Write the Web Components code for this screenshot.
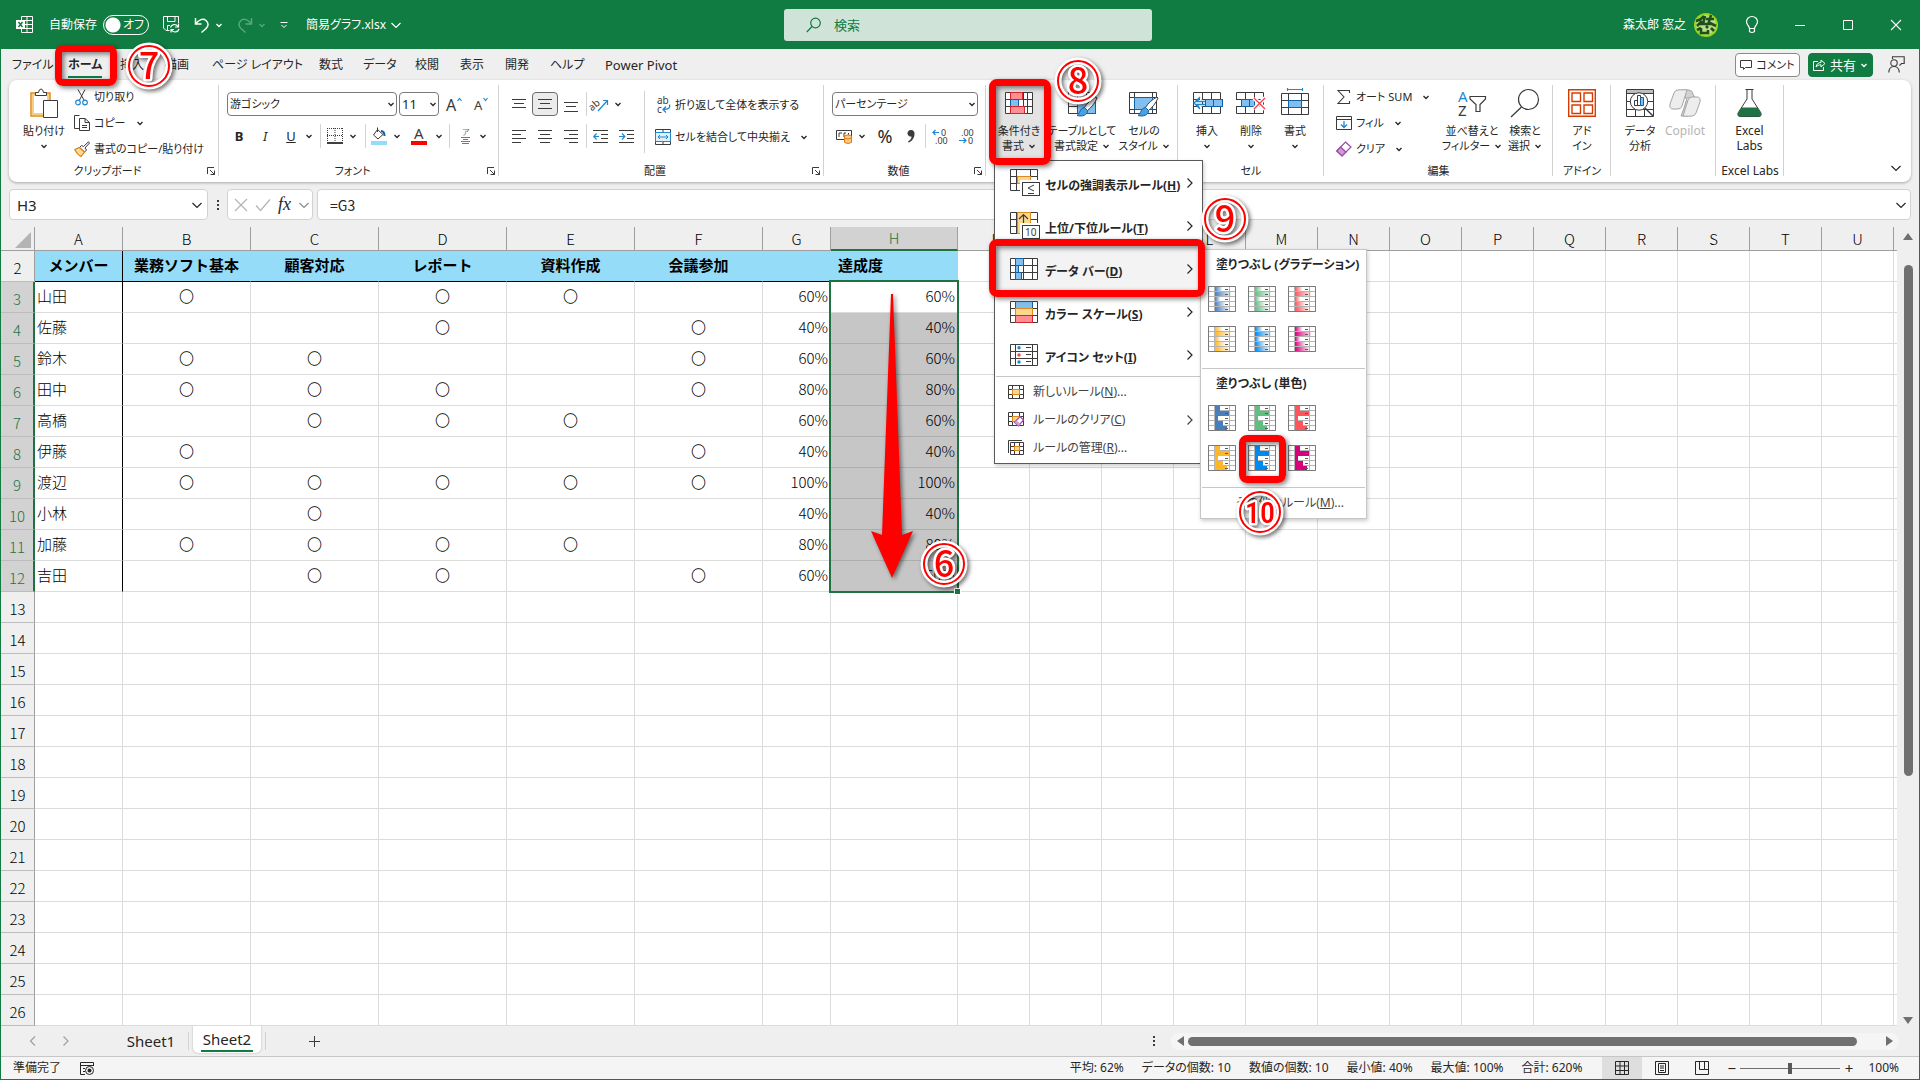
<!DOCTYPE html>
<html lang="ja">
<head>
<meta charset="utf-8">
<title>簡易グラフ.xlsx</title>
<style>
  html, body {
    margin: 0;
    height: 100%;
  }

  body {
    --green: #107c41;
    --ink: #262626;
    --chrome: #efefef;
    --line: #d2d2d2;
    --blue: #1e88d2;
    --red: #ff0000;
    font-family: "Noto Sans", "Noto Sans CJK JP", sans-serif;
    font-size: 12px;
    line-height: 16px;
    color: var(--ink);
    overflow: hidden;
  }
</style>
</head>
<body>
<excel-window></excel-window>

<script>
const BASE_CSS = `
  *, *::before, *::after { box-sizing: border-box; }
  button, input, select {
    font: inherit;
    color: inherit;
    border: 0;
    margin: 0;
    padding: 0;
    background: none;
    border-radius: 0;
    font-feature-settings: inherit;
  }
  button { white-space: nowrap; cursor: default; }
  svg { display: block; }
`;

class BaseElement extends HTMLElement {
  constructor() {
    super();
    this.attachShadow({ mode: 'open' });
  }

  connectedCallback() {
    this.shadowRoot.innerHTML = `<style>${BASE_CSS}${this.styles()}</style>${this.render()}`;
  }

  styles() { return ''; }
  render() { return '<slot></slot>'; }
}

/* ---------- icons ---------- */

const DARK = '#3b3b3b';

// outlined table with the given inner column and row lines
const table = (w, h, xs, ys, stroke = DARK) => `
  <path fill="#fff" stroke="${stroke}" d="M.5 .5H${w - 0.5}V${h - 0.5}H.5Z"/>
  <path fill="none" stroke="${stroke}" d="${xs.map(x => `M${x}.5 0V${h}`).join('')}${ys.map(y => `M0 ${y}.5H${w}`).join('')}"/>`;

const box = (x, y, w, h, fill, stroke) =>
  `<rect x="${x}.5" y="${y}.5" width="${w}" height="${h}" fill="${fill}" stroke="${stroke}"/>`;

const brush = (x, y) => `<g transform="translate(${x} ${y})">
  <path fill="#fff" stroke="${DARK}" d="M19 0 20 1C18 6 14 11 10.500 13.500L7.500 10.500C10 6 15 2 19 0Z"/>
  <path fill="#4ba0e0" stroke="#0f62a8" d="M7.500 10.500 10.500 13.500C11 18 5 20 0 18.500 3 17 2.500 11 7.500 10.500Z"/></g>`;

const lines = rows => `<path stroke="${DARK}" d="${rows.map(([x, y, w]) => `M${x} ${y}.5h${w}`).join('')}"/>`;

const ICONS = {
  chevron: [8, 8, `<path fill="none" stroke="currentColor" stroke-width="1.300" d="M1.500 3 4 5.500 6.500 3"/>`],
  chevronBig: [12, 12, `<path fill="none" stroke="currentColor" stroke-width="1.200" d="M1.500 4 6 8.500 10.500 4"/>`],
  arrowRight: [8, 12, `<path fill="none" stroke="currentColor" stroke-width="1.200" d="M1.500 1.500 6 6 1.500 10.500"/>`],
  arrowLeft: [8, 12, `<path fill="none" stroke="currentColor" stroke-width="1.200" d="M6 1.500 1.500 6 6 10.500"/>`],
  launcher: [10, 10, `<path fill="none" stroke="${DARK}" d="M1.500 8V1.500H8M4 4 8.500 8.500M8.500 4.500V8.500H4.500"/>`],
  excel: [17, 17, `<path fill="none" stroke="#fff" d="M5.500 4V.5H16.500V16.500H5.500V13M11 .5V16.500M5.500 4.500H16.500M5.500 8.500H16.500M5.500 12.500H16.500"/>
    <rect y="4" width="9" height="9" fill="#fff"/><path stroke="#107c41" stroke-width="1.500" d="M2.500 6 6.500 11M6.500 6 2.500 11"/>`],
  save: [17, 17, `<path fill="none" stroke="#fff" d="M6.500 14.500H3L.5 12V.5H15.500V7M4.500 .5V5.500H12V.5M4.500 14V9.500H7"/>
    <path fill="none" stroke="#fff" stroke-width="1.200" d="M7.500 11.500C8.500 8 13 7.500 15 10.500M15.500 7.500V11H12M16 13C15 16.500 10.500 17 8.500 14M8 16.500V13.500H11"/>`],
  undo: [16, 16, `<path fill="none" stroke="#fff" stroke-width="1.500" d="M1.500 1V7H7.500M1.500 7C5 2.500 9 1 12 3.500 15 6 14.500 9 12 11.500L7.500 15.500"/>`],
  redo: [16, 16, `<path fill="none" stroke="#5aa67c" stroke-width="1.500" d="M14.500 1V7H8.500M14.500 7C11 2.500 7 1 4 3.500 1 6 1.500 9 4 11.500L8.500 15.500"/>`],
  customize: [8, 8, `<path fill="none" stroke="#fff" d="M.5 1.500H7.500M1.500 4 4 6.500 6.500 4"/>`],
  search: [16, 16, `<circle cx="9.500" cy="6" r="4.800" fill="none" stroke="#107c41" stroke-width="1.200"/><path stroke="#107c41" stroke-width="1.200" d="M6 9.500.8 15"/>`],
  avatar: [24, 24, `<circle cx="12" cy="12" r="12" fill="#9bd51c"/><circle cx="12" cy="12" r="10" fill="#b9dd8a"/><path fill="none" stroke="#1f4f1a" stroke-width="2.600" d="M2 8Q7 7 10 3M11 3 9 11M3 13 8 8M12 6H20M17 2 14 12M14 9 22 13M3 17 7 15M7 15V20H14V17M12 13 14 15M17 15 20 18M5 11H18"/>`],
  bulb: [14, 18, `<path fill="none" stroke="#fff" stroke-width="1.200" d="M4.500 12.500C4.500 10 1.500 9 1.500 5.800A5.500 5.300 0 0 1 12.500 5.800C12.500 9 9.500 10 9.500 12.500ZM4.500 12.500V15.500Q7 17.500 9.500 15.500V12.500"/>`],
  min: [12, 12, `<path stroke="#fff" d="M1 6.500H11"/>`],
  max: [12, 12, `<path fill="none" stroke="#fff" d="M1.500 1.500H10.500V10.500H1.500Z"/>`],
  close: [12, 12, `<path stroke="#fff" stroke-width="1.100" d="M1 1 11 11M11 1 1 11"/>`],
  comment: [12, 12, `<path fill="none" stroke="${DARK}" d="M.5 1.500H11.500V8.500H5.500L3.500 10.500V8.500H.5Z"/>`],
  share: [13, 13, `<path fill="none" stroke="#fff" d="M5 3.500H.5V12.500H10.500V9M3 9C3.500 6 5.500 4.500 8 4.500V2L12 5.500 8 9V6.800C6 6.800 4.500 7.500 3 9Z"/>`],
  person: [17, 17, `<path fill="none" stroke="${DARK}" stroke-width="1.100" d="M4.500 3V.8H16.200V7.500H13.500L11.500 9.500"/><circle cx="6" cy="7" r="3.200" fill="none" stroke="${DARK}" stroke-width="1.100"/><path fill="none" stroke="${DARK}" stroke-width="1.100" d="M.8 16.500C1 12.500 3 10.500 6 10.500S11 12.500 11.300 16.500"/>`],
  paste: [28, 30, `<path fill="#fff7e6" stroke="#e08a1e" stroke-width="1.500" d="M1 5H20V28H1Z"/><path fill="#fff" stroke="#f6cf85" stroke-width="2" d="M3 7H18V26H3Z"/>
    <path fill="#fff" stroke="${DARK}" d="M5.500 7.500V4.500H8.500Q9 1 11 1T13.500 4.500H16.500V7.500Z"/><path fill="#fff" stroke="${DARK}" d="M13.500 12.500H27.500V29.500H13.500Z"/>`],
  cut: [16, 17, `<path fill="none" stroke="${DARK}" d="M4 .5 10.500 12M11 .5 5 12"/><circle cx="4" cy="13.500" r="2.300" fill="none" stroke="#1e88d2" stroke-width="1.200"/><circle cx="11" cy="13.500" r="2.300" fill="none" stroke="#1e88d2" stroke-width="1.200"/>`],
  copy: [16, 16, `<path fill="#fff" stroke="${DARK}" d="M5 13.500H.5V.5H5.500"/><path fill="#fff" stroke="${DARK}" d="M5.500 3.500H11L15.500 7.500V15.500H5.500Z"/><path fill="none" stroke="${DARK}" d="M11 3.500V7.500H15.500M8 10.500H13M8 12.500H13"/>`],
  format: [16, 16, `<path fill="#fff" stroke="${DARK}" d="M14.500 .8 15.500 2 11 7 12.500 9 10.500 11 5.500 6.500 7.500 4.500 9.500 5.500Z"/><path fill="#f9dca0" stroke="#e07b10" stroke-width="1.200" d="M5.500 6.500 10.500 11 7 15.500C4 14 2 11 .8 8.500Z"/>`],
  growFont: [17, 15, `<text x="0" y="14" font-size="16" fill="${DARK}">A</text><path fill="none" stroke="#1e88d2" stroke-width="1.200" d="M11.500 4 13.500 1.500 15.500 4"/>`],
  shrinkFont: [15, 14, `<text x="0" y="13" font-size="13" fill="${DARK}">A</text><path fill="none" stroke="#1e88d2" stroke-width="1.200" d="M9.500 1 11.500 3.500 13.500 1"/>`],
  borders: [16, 16, `<path fill="none" stroke="${DARK}" stroke-dasharray="1 1" d="M0 .5H16M.5 0V14M15.500 0V14M8 0V14M0 7.500H16"/><path stroke="#000" stroke-width="1.500" d="M0 15H16"/>`],
  fill: [16, 18, `<path fill="#fff" stroke="${DARK}" d="M6.500 2.500 12 7.500 7 12 2.500 8ZM6.500 5V.5"/><path fill="none" stroke="#0f62a8" stroke-width="2" d="M10 4Q13.500 4 13.500 9"/><rect y="14" width="16" height="4" fill="#94dcf8"/>`],
  fontColor: [16, 18, `<text x="3" y="12" font-size="15" fill="${DARK}">A</text><rect y="14" width="16" height="4" fill="#f00"/>`],
  ruby: [12, 18, `<text x="2" y="8" font-size="8" fill="#777">ア</text><path stroke="#777" d="M1 10.500H10M3 12.500H8M1 14.500H10M2 16.500H9"/>`],
  top: [14, 14, lines([[0, 2, 14], [2, 6, 10], [0, 10, 14]])],
  middle: [14, 14, lines([[0, 2, 14], [2, 6, 10], [0, 11, 14]])],
  bottom: [14, 18, lines([[0, 7, 14], [2, 11, 10], [0, 16, 14]])],
  left: [14, 14, lines([[0, 1, 14], [0, 5, 9], [0, 9, 14], [0, 13, 9]])],
  center: [14, 14, lines([[0, 1, 14], [2, 5, 10], [0, 9, 14], [2, 13, 10]])],
  right: [14, 14, lines([[0, 1, 14], [5, 5, 9], [0, 9, 14], [5, 13, 9]])],
  orient: [16, 16, `<text x="-4" y="11" font-size="10" fill="${DARK}" transform="rotate(-40 4 8)">ab</text><path fill="none" stroke="#1e88d2" stroke-width="1.200" d="M6 15 15 5M11 4.500H15.500V9"/>`],
  outdent: [15, 14, `${lines([[0, 1, 15], [8, 5, 7], [8, 9, 7], [0, 13, 15]])}<path fill="none" stroke="#1e88d2" stroke-width="1.200" d="M6 7.500H.8M3.500 4.500.8 7.500 3.500 10.500"/>`],
  indent: [15, 14, `${lines([[0, 1, 15], [8, 5, 7], [8, 9, 7], [0, 13, 15]])}<path fill="none" stroke="#1e88d2" stroke-width="1.200" d="M0 7.500H5.500M3 4.500 5.800 7.500 3 10.500"/>`],
  wrap: [16, 16, `<text x="2" y="7" font-size="10" fill="${DARK}">ab</text><text x="2" y="16" font-size="10" fill="${DARK}">c</text><path fill="none" stroke="#1e88d2" stroke-width="1.300" d="M14.500 7.500Q16 12.500 8.500 12.500M11 9.500 8 12.500 11 15.500"/>`],
  merge: [16, 16, `<path fill="#fff" stroke="${DARK}" d="M.5 .5H15.500V15.500H.5ZM8 .5V3.500M8 12V15.500"/><path fill="#dff0fb" stroke="#1e88d2" d="M.5 3.500H15.500V12.500H.5Z"/><path fill="none" stroke="#1e88d2" d="M3 8H13M5 6 3 8 5 10M11 6 13 8 11 10"/>`],
  currency: [17, 15, `<path fill="#fff" stroke="${DARK}" d="M.5 1.500H15.500V10.500H.5Z"/><path fill="none" stroke="${DARK}" d="M6 4H3V8M8 8V4H10M12.500 4V8"/><path fill="#f9c98e" stroke="#e07b10" d="M8.500 7V13.500Q12 15.500 15.500 13.500V7Q12 4.500 8.500 7ZM8.500 9Q12 11 15.500 9"/>`],
  comma: [8, 14, `<path fill="${DARK}" d="M4 1A3.200 3.200 0 0 1 7.500 4.500C7.500 9 5 12.500 1.500 13.500L1 12.500C3.500 11 4.500 9.500 4.500 7.500A3.300 3.300 0 1 1 4 1Z"/>`],
  incDec: [17, 17, `<text x="9" y="8" font-size="9" fill="${DARK}">0</text><text x="3" y="16" font-size="9" fill="${DARK}">.00</text><path fill="none" stroke="#1e88d2" stroke-width="1.200" d="M7 4.500H1M3.500 2 1 4.500 3.500 7"/>`],
  decDec: [17, 17, `<text x="3" y="8" font-size="9" fill="${DARK}">.00</text><text x="10" y="16" font-size="9" fill="${DARK}">0</text><path fill="none" stroke="#1e88d2" stroke-width="1.200" d="M1 12.500H8M5.500 10 8 12.500 5.500 15"/>`],
  cond: [28, 28, `<g transform="translate(0 3)">${table(28, 22, [5, 18, 22], [7, 14])}${box(5, 0, 12, 7, '#ff8f93', '#d4252c')}${box(5, 7, 8, 7, '#83bfee', '#0f62a8')}${box(5, 14, 14, 7, '#ff8f93', '#d4252c')}</g>`],
  asTable: [32, 28, `<g transform="translate(2 3)">${table(28, 22, [9, 18], [7, 14])}${box(9, 7, 18, 14, '#83bfee', '#0f62a8')}</g>${brush(11, 8)}`],
  cellStyle: [32, 28, `<g transform="translate(1 3)">${table(28, 22, [5, 23], [5, 17])}${box(5, 5, 18, 12, '#83bfee', '#0f62a8')}</g>${brush(10, 8)}`],
  insert: [32, 28, `<g transform="translate(2 3)">${table(28, 22, [9, 18], [7, 14])}${box(12, 7, 17, 7, '#83bfee', '#0f62a8')}<path stroke="#0f62a8" d="M20.500 7V14"/><path fill="#fff" stroke="#1e88d2" stroke-width="1.300" d="M12 9.500H4L6.500 6M12 12.500H4L6.500 16M7 5 1 11 7 17"/></g>`],
  remove: [30, 28, `<g transform="translate(0 3)">${table(28, 22, [9, 18], [7, 14])}<rect x="-1" y="8" width="5" height="6" fill="#fff"/>${box(5, 7, 13, 7, '#83bfee', '#0f62a8')}<path stroke="#0f62a8" d="M13.500 7V14"/><path stroke="#fff" stroke-width="4" d="M18 6 29 17M29 6 18 17"/><path stroke="#e8484d" stroke-width="1.400" d="M18 6 29 17M29 6 18 17"/></g>`],
  cellFormat: [28, 30, `<path fill="none" stroke="#1e88d2" stroke-width="1.200" d="M6.500 0V3M21.500 0V3M6.500 1.500H21.500"/><g transform="translate(0 5)">${table(28, 22, [7, 20], [7, 14])}${box(7, 7, 13, 7, '#83bfee', '#0f62a8')}</g>`],
  sum: [16, 16, `<path fill="none" stroke="${DARK}" stroke-width="1.100" d="M13.500 4V1.500H2L8 8 2 14.500H13.500V12"/>`],
  fillDown: [16, 16, `<path fill="#fff" stroke="${DARK}" d="M.5 1.500H15.500V14.500H.5ZM.5 4.500H15.500"/><path fill="none" stroke="#1e88d2" stroke-width="1.300" d="M8 6V12.500M5 9.500 8 12.500 11 9.500"/>`],
  eraser: [16, 16, `<path fill="#fff" stroke="#9b4aa5" stroke-width="1.200" d="M9.500 1 15 6 6 15 .8 10Z"/><path fill="#cf9bd6" stroke="#9b4aa5" stroke-width="1.200" d="M4.500 6 10 11 6 15 .8 10Z"/>`],
  sort: [30, 28, `<text x="1" y="13" font-size="15" fill="#1e88d2">A</text><text x="1" y="27" font-size="15" fill="${DARK}">Z</text><path fill="#fff" stroke="${DARK}" stroke-width="1.200" d="M13 7.500H28.500V10L23 15.500V22.500H19V15.500L13 10Z"/>`],
  find: [30, 30, `<circle cx="18.500" cy="11.500" r="10" fill="#fff" stroke="${DARK}" stroke-width="1.200"/><path stroke="${DARK}" stroke-width="1.300" d="M11.500 19 1 29"/>`],
  addin: [28, 28, `<path fill="none" stroke="#d83b01" stroke-width="1.400" d="M.7 .7H27.300V27.300H.7ZM4 4H12.500V12.500H4ZM16 4H24.500V12.500H16ZM4 16H12.500V24.500H4ZM16 16H24.500V24.500H16Z"/>`],
  analyze: [28, 28, `<path fill="#fff" stroke="${DARK}" d="M.5 .5H27.500V27.500H.5Z"/><rect x="1" y="1" width="26" height="3" fill="#bdbdbd"/><path stroke="${DARK}" d="M0 4.500H28M0 12.500H6M22 12.500H28M0 20.500H28M9.500 20V28M18.500 20V28"/>
    <circle cx="13" cy="12.500" r="8.700" fill="#fff" stroke="${DARK}"/><path stroke="${DARK}" stroke-width="1.500" d="M19 19 27 27"/><path fill="#fff" stroke="${DARK}" d="M8.500 11.500H11.500V16.500H8.500ZM11.500 6.500H14.500V16.500H11.500Z"/><path fill="#83bfee" stroke="#0f62a8" d="M14.500 8.500H17.500V16.500H14.500Z"/>`],
  copilot: [32, 28, `<path fill="#d2d2d2" stroke="#a5a5a5" d="M13 1H20Q23 1 24 5L26 9H18L15 19 12 27H19L22 20Z"/><path fill="#ededed" stroke="#a5a5a5" d="M10 .8H18L13 17Q12 20 9 20H4Q0 20 1 15L5 4Q6 .8 10 .8Z"/><path fill="#ededed" stroke="#a5a5a5" d="M22 27.200H14L19 11Q20 8 23 8H28Q32 8 31 13L27 24Q26 27.200 22 27.200Z"/>`],
  flask: [26, 28, `<path fill="#fff" stroke="${DARK}" d="M8.500 .5H16.500M10 .5V10L1 24Q0 27.500 3 27.500H22Q25 27.500 24 24L15 10V.5"/><path fill="#1f7244" d="M4.500 18.500H20.500L24 24.500Q24.500 27.500 22 27.500H3Q.5 27.500 1 24.500Z"/>`],
  menuHighlight: [31, 28, `${table(28, 22, [6, 20], [7, 14])}${box(7, 7, 13, 7, '#fbd78f', '#e08a1e')}<rect x="10" y="11" width="21" height="17" fill="#fff"/>${box(12, 13, 17, 13, '#fff', DARK)}<path fill="none" stroke="${DARK}" d="M24 16 18 19 24 22M18 24.500H24"/>`],
  menuTop: [31, 28, `${table(28, 22, [6, 20], [7, 14])}${box(7, 0, 13, 21, '#fbd78f', '#e08a1e')}<path fill="none" stroke="${DARK}" stroke-width="1.200" d="M13.500 12V2.500M9 7 13.500 2.500 18 7"/><rect x="10" y="11" width="21" height="17" fill="#fff"/>${box(12, 13, 17, 13, '#fff', DARK)}<text x="15" y="24" font-size="10" font-weight="normal" fill="${DARK}">10</text>`],
  menuBar: [28, 22, `${table(28, 22, [5, 13, 22], [7, 14])}${box(5, 0, 8, 7, '#83bfee', '#0f62a8')}${box(5, 7, 3, 7, '#83bfee', '#0f62a8')}${box(5, 14, 6, 7, '#83bfee', '#0f62a8')}`],
  menuScale: [28, 22, `${table(28, 22, [5, 22], [7, 14])}${box(5, 0, 17, 7, '#83bfee', '#0f62a8')}${box(5, 7, 17, 7, '#fbd78f', '#e08a1e')}${box(5, 14, 17, 7, '#ff8f93', '#d4252c')}`],
  menuSet: [28, 22, `${table(28, 22, [5, 22], [7, 14])}<circle cx="9" cy="3.800" r="1.700" fill="#1e88d2"/><circle cx="9" cy="11" r="1.700" fill="#e8484d"/><circle cx="9" cy="18" r="1.700" fill="#1e88d2"/><path stroke="${DARK}" d="M16 3.500H21M16 10.500H21M16 17.500H21"/>`],
  newRule: [16, 14, `${table(16, 14, [4, 11], [4, 9])}${box(4, 4, 7, 5, '#fbd78f', '#e08a1e')}`],
  clearRule: [16, 16, `${table(16, 14, [4, 11], [4, 9])}${box(4, 4, 7, 5, '#fbd78f', '#e08a1e')}<path fill="#fff" stroke="#9b4aa5" stroke-width="1.200" d="M12 4.500 15.500 8 10.500 14 6.500 10.500Z"/><path fill="#cf9bd6" d="M8.500 8.500 12.500 12 10.500 14 6.500 10.500Z"/>`],
  manageRule: [16, 15, `<path fill="none" stroke="${DARK}" d="M.5 13V.5H14"/><g transform="translate(2 2)">${table(14, 13, [4, 9], [4, 8])}${box(4, 4, 5, 4, '#fbd78f', '#e08a1e')}</g>`],
  cancel: [14, 14, `<path stroke="#b4b4b4" stroke-width="1.200" d="M1 1 13 13M13 1 1 13"/>`],
  enter: [16, 14, `<path fill="none" stroke="#b4b4b4" stroke-width="1.200" d="M1 7.500 5.500 12.500 15 1.500"/>`],
  dots: [4, 12, `<path fill="${DARK}" d="M1 1H3V3H1ZM1 5H3V7H1ZM1 9H3V11H1Z"/>`],
  plus: [12, 12, `<path stroke="${DARK}" d="M6.500 1V12M1 6.500H12"/>`],
  macro: [15, 13, `<path fill="none" stroke="#262626" d="M5 12.500H.5V.5H13.500V4M.5 3.500H13.500M3 6.500H5M3 9.500H5"/><circle cx="9.500" cy="8.500" r="4" fill="none" stroke="#262626"/><circle cx="9.500" cy="8.500" r="2" fill="#262626"/>`],
  viewNormal: [14, 14, `<path fill="none" stroke="#262626" d="M.5 .5H13.500V13.500H.5ZM5 .5V13.500M9.500 .5V13.500M.5 5H13.500M.5 9.500H13.500"/>`],
  viewPage: [14, 14, `<path fill="none" stroke="#262626" d="M.5 .5H13.500V13.500H.5ZM3.500 2.500H10.500V11.500H3.500ZM5 5H9M5 7H9M5 9.500H9"/>`],
  viewBreak: [14, 14, `<path fill="none" stroke="#262626" d="M.5 .5H13.500V13.500H.5ZM4.500 .5V8.500H9.500V.5M9.500 8.500H13.500"/>`],
  triUp: [10, 8, `<path fill="#707070" d="M5 0 10 7H0Z"/>`],
  triDown: [10, 8, `<path fill="#707070" d="M0 1H10L5 8Z"/>`],
  triLeft: [8, 10, `<path fill="#707070" d="M0 5 7 0V10Z"/>`],
  triRight: [8, 10, `<path fill="#707070" d="M8 5 1 0V10Z"/>`],
};

const svg = ([w, h, body]) => `<svg width="${w}" height="${h}" viewBox="0 0 ${w} ${h}" aria-hidden="true">${body}</svg>`;

class XlIcon extends BaseElement {
  styles() { return ':host { display: block; flex: none; } svg { overflow: visible; }'; }
  render() { return svg(ICONS[this.getAttribute('name')]); }
}

const icon = name => `<xl-icon name="${name}"></xl-icon>`;

/* ---------- title bar and tabs ---------- */

class TitleBar extends BaseElement {
  styles() {
    return `
      :host {
        display: grid;
        grid-template-columns: 1fr 368px 1fr;
        align-items: center;
        height: 49px;
        padding-left: 16px;
        background: var(--green);
        color: #fff;
      }
      div { display: flex; align-items: center; }
      .switch {
        appearance: none;
        width: 46px;
        height: 20px;
        border: 1px solid #fff;
        border-radius: 10px;
        background: radial-gradient(circle at 9px 9px, #fff 7px, transparent 8px);
      }
      .toggle { display: grid; align-items: center; }
      .toggle > * { grid-area: 1 / 1; }
      .toggle span { justify-self: end; padding-right: 5px; }
      .quick { gap: 6px; }
      .quick button, .right button { display: grid; place-items: center; }
      .undo { grid-template-columns: 16px 8px; gap: 5px; margin-left: 8px; }
      .file { display: flex; align-items: center; gap: 4px; }
      .search {
        height: 32px;
        border-radius: 3px;
        background: #cfe3d8;
        color: var(--green);
        gap: 12px;
        padding-left: 22px;
      }
      .search input { width: 240px; outline: 0; font-size: 13px; }
      .search input::placeholder { color: var(--green); opacity: 1; }
      .right { justify-content: flex-end; }
      .right button { width: 48px; height: 48px; }
      .user { display: flex; gap: 8px; align-items: center; margin-right: 10px; }
    `;
  }

  render() {
    return `
      <div>
        ${icon('excel')}
        <label for="auto" style="padding:0 6px 0 16px">自動保存</label>
        <span class="toggle"><input class="switch" id="auto" type="checkbox" role="switch"><span>オフ</span></span>
        <div class="quick" style="padding-left:14px">
          <button aria-label="上書き保存">${icon('save')}</button>
          <button class="undo" aria-label="元に戻す">${icon('undo')}${icon('chevron')}</button>
          <button class="undo" aria-label="やり直し">${icon('redo')}<span style="color:#5aa67c">${icon('chevron')}</span></button>
          <button aria-label="カスタマイズ" style="padding:0 18px 0 8px">${icon('customize')}</button>
        </div>
        <button class="file">簡易グラフ.xlsx ${icon('chevronBig')}</button>
      </div>
      <div class="search">${icon('search')}<input type="search" aria-label="検索" placeholder="検索"></div>
      <div class="right">
        <span class="user">森太郎 窓之 ${icon('avatar')}</span>
        <button aria-label="ヒント">${icon('bulb')}</button>
        <button aria-label="最小化">${icon('min')}</button>
        <button aria-label="最大化">${icon('max')}</button>
        <button aria-label="閉じる">${icon('close')}</button>
      </div>`;
  }
}

const TABS = [['ファイル', 56], ['ホーム', 52], ['挿入', 45], ['描画', 47], ['ページ レイアウト', 107], ['数式', 44],
  ['データ', 52], ['校閲', 45], ['表示', 45], ['開発', 45], ['ヘルプ', 55], ['Power Pivot', 80]];

class TabStrip extends BaseElement {
  styles() {
    return `
      :host { display: flex; align-items: center; height: 31px; padding: 0 14px 0 11px; }
      nav { display: flex; flex: 1; }
      nav button { text-align: left; height: 26px; }
      nav button:last-child { font-size: 13px; }
      .on { font-weight: bold; }
      .on span { display: inline-block; height: 26px; line-height: 26px; border-bottom: 2px solid var(--green); }
      .act {
        display: flex;
        align-items: center;
        justify-content: center;
        gap: 4px;
        height: 24px;
        border: 1px solid #8a8a8a;
        border-radius: 4px;
        background: #fff;
        margin-right: 8px;
        width: 65px;
        font-size: 11px;
      }
      .share { background: var(--green); border-color: var(--green); color: #fff; margin-right: 15px; font-size: 13px; }
    `;
  }

  render() {
    return `
      <nav>${TABS.map(([name, w]) => `<button class="${name === 'ホーム' ? 'on' : ''}" style="width:${w}px"><span>${name}</span></button>`).join('')}</nav>
      <button class="act">${icon('comment')}コメント</button>
      <button class="act share">${icon('share')}共有 ${icon('chevron')}</button>
      <button aria-label="アカウント">${icon('person')}</button>`;
  }
}

/* ---------- ribbon ---------- */

class RibbonGroup extends BaseElement {
  styles() {
    return `
      :host { display: flex; flex-direction: column; position: relative; padding: 4px 0 1px; flex: none; }
      :host::after {
        content: "";
        position: absolute;
        right: 0;
        top: 5px;
        bottom: 6px;
        width: 1px;
        background: var(--line);
      }
      .body { display: flex; height: 78px; }
      footer { display: flex; align-items: center; height: 18px; font-size: 11px; }
      :host([latin]) footer { font-size: 12px; }
      footer span { flex: 1; text-align: center; white-space: nowrap; }
      footer button { padding-right: 3px; }
    `;
  }

  render() {
    const launcher = this.hasAttribute('launcher')
      ? `<button aria-label="${this.getAttribute('label')}の設定">${icon('launcher')}</button>` : '';
    return `<div class="body"><slot></slot></div><footer><span>${this.getAttribute('label') || ''}</span>${launcher}</footer>`;
  }
}

class BigButton extends BaseElement {
  styles() {
    return `
      :host { display: block; flex: none; font-size: 11px; }
      :host([latin]) { font-size: 12px; }
      :host([active]) button { background: #e3e3e3; }
      :host([disabled]) { color: #b4b4b4; }
      button {
        width: 100%;
        height: 76px;
        display: grid;
        grid-template-rows: 38px 16px 15px;
        grid-template-columns: 100%;
        justify-items: center;
        align-items: center;
        line-height: 15px;
      }
      .two { display: flex; align-items: center; gap: 4px; }
    `;
  }

  render() {
    const chev = this.hasAttribute('menu') ? icon('chevron') : '';
    return `<button>${icon(this.getAttribute('icon'))}<span>${this.getAttribute('line1')}</span>
      <span class="two">${this.getAttribute('line2') || ''}${chev}</span></button>`;
  }
}

class SmallButton extends BaseElement {
  styles() {
    return `
      :host { display: block; font-size: 11px; }
      button { display: flex; align-items: center; height: 26px; gap: 4px; width: 100%; text-align: left; }
      .end { padding-left: 6px; }
    `;
  }

  render() {
    const chev = this.hasAttribute('menu') ? `<span class="end">${icon('chevron')}</span>` : '';
    return `<button>${icon(this.getAttribute('icon'))}<span><slot></slot></span>${chev}</button>`;
  }
}

class ToolButton extends BaseElement {
  styles() {
    return `
      :host { display: block; flex: none; }
      button { width: 100%; height: 24px; display: grid; place-items: center; font-size: 13px; }
      :host([pressed]) button { border: 1px solid #6b6b6b; border-radius: 4px; background: #ebebeb; }
    `;
  }

  render() {
    const name = this.getAttribute('icon');
    return `<button aria-label="${this.getAttribute('tip') || ''}">${name ? icon(name) : '<slot></slot>'}</button>`;
  }
}

class DropBox extends BaseElement {
  styles() {
    return `
      :host { display: grid; align-items: center; flex: none; height: 24px; font-size: 11px; }
      :host([latin]) { font-size: 13px; }
      select, xl-icon { grid-area: 1 / 1; }
      select {
        appearance: none;
        width: 100%;
        height: 24px;
        padding-left: 2px;
        border: 1px solid #7a7a7a;
        border-radius: 4px;
        background: #fff;
      }
      xl-icon { justify-self: end; margin-right: 2px; pointer-events: none; }
    `;
  }

  render() {
    return `<select aria-label="${this.getAttribute('tip')}"><option>${this.getAttribute('value')}</option></select>${icon('chevron')}`;
  }
}

const tool = (name, w, tip = name) => `<tool-button icon="${name}" tip="${tip}" style="width:${w}px"></tool-button>`;
const rule = w => `<i class="rule" style="width:${w}px"></i>`;

class RibbonBar extends BaseElement {
  styles() {
    return `
      :host {
        display: flex;
        height: 102px;
        margin: 0 8px;
        background: #fff;
        border-radius: 8px;
        box-shadow: 0 1px 3px rgba(0, 0, 0, 0.3);
      }
      .col { display: flex; flex-direction: column; }
      .rows { display: flex; flex-direction: column; gap: 8px; padding-top: 8px; }
      .row { display: flex; align-items: center; }
      .rule { height: 24px; background: linear-gradient(var(--line), var(--line)) center / 1px 100% no-repeat; }
      .tall { width: 1px; height: 62px; margin: 7px 10px 0 4px; background: var(--line); }
      .fold { margin: auto 9px 8px auto; }
    `;
  }

  render() {
    return `
      <ribbon-group label="クリップボード" launcher style="width:210px">
        <big-button icon="paste" line1="貼り付け" menu style="width:60px;padding-left:10px"></big-button>
        <div class="col" style="padding-left:5px">
          <small-button icon="cut">切り取り</small-button>
          <small-button icon="copy" menu>コピー</small-button>
          <small-button icon="format">書式のコピー/貼り付け</small-button>
        </div>
      </ribbon-group>
      <ribbon-group label="フォント" launcher style="width:280px">
        <div class="rows" style="padding-left:8px">
          <div class="row">
            <drop-box tip="フォント" value="游ゴシック" style="width:170px;margin-right:2px"></drop-box>
            <drop-box tip="サイズ" value="11" latin style="width:40px"></drop-box>
            ${tool('growFont', 30)}${tool('shrinkFont', 24)}
          </div>
          <div class="row">
            <tool-button tip="太字" style="width:24px"><b>B</b></tool-button>
            <tool-button tip="斜体" style="width:28px"><i>I</i></tool-button>
            <tool-button tip="下線" style="width:24px"><u>U</u></tool-button>
            ${tool('chevron', 12)}${rule(10)}${tool('borders', 20)}${tool('chevron', 16)}${rule(8)}
            ${tool('fill', 20)}${tool('chevron', 16)}${tool('fontColor', 28)}${tool('chevron', 12)}${rule(8)}
            ${tool('ruby', 26)}${tool('chevron', 8)}
          </div>
        </div>
      </ribbon-group>
      <ribbon-group label="配置" launcher style="width:325px">
        <div class="rows" style="padding-left:7px">
          <div class="row">${tool('top', 26)}<tool-button icon="middle" pressed tip="上下中央" style="width:26px"></tool-button>${tool('bottom', 26)}${rule(4)}${tool('orient', 24)}${tool('chevron', 12)}</div>
          <div class="row">${tool('left', 26)}${tool('center', 26)}${tool('right', 26)}${rule(4)}${tool('outdent', 24)}${tool('indent', 28)}</div>
        </div>
        <i class="tall"></i>
        <div class="col" style="gap:6px;padding-top:8px">
          <small-button icon="wrap">折り返して全体を表示する</small-button>
          <small-button icon="merge" menu>セルを結合して中央揃え</small-button>
        </div>
      </ribbon-group>
      <ribbon-group label="数値" launcher style="width:162px">
        <div class="rows" style="padding-left:8px">
          <drop-box tip="表示形式" value="パーセンテージ" style="width:146px"></drop-box>
          <div class="row">
            ${tool('currency', 24)}${tool('chevron', 12)}
            <tool-button tip="パーセント" style="width:34px"><span style="font-size:18px">%</span></tool-button>
            ${tool('comma', 18)}${rule(10)}${tool('incDec', 20)}${tool('decDec', 32)}
          </div>
        </div>
      </ribbon-group>
      <ribbon-group style="width:192px">
        <big-button icon="cond" line1="条件付き" line2="書式" menu active style="width:60px;margin-left:3px"></big-button>
        <big-button icon="asTable" line1="テーブルとして" line2="書式設定" menu style="width:66px"></big-button>
        <big-button icon="cellStyle" line1="セルの" line2="スタイル" menu style="width:58px"></big-button>
      </ribbon-group>
      <ribbon-group label="セル" style="width:146px">
        <big-button icon="insert" line1="挿入" menu style="width:44px;margin-left:7px"></big-button>
        <big-button icon="remove" line1="削除" menu style="width:44px"></big-button>
        <big-button icon="cellFormat" line1="書式" menu style="width:44px"></big-button>
      </ribbon-group>
      <ribbon-group label="編集" style="width:229px">
        <div class="col" style="width:108px;margin-left:12px">
          <small-button icon="sum" menu>オート SUM</small-button>
          <small-button icon="fillDown" menu>フィル</small-button>
          <small-button icon="eraser" menu>クリア</small-button>
        </div>
        <big-button icon="sort" line1="並べ替えと" line2="フィルター" menu style="width:56px"></big-button>
        <big-button icon="find" line1="検索と" line2="選択" menu style="width:50px"></big-button>
      </ribbon-group>
      <ribbon-group label="アドイン" style="width:58px">
        <big-button icon="addin" line1="アド" line2="イン" style="width:58px"></big-button>
      </ribbon-group>
      <ribbon-group style="width:105px">
        <big-button icon="analyze" line1="データ" line2="分析" style="width:48px;margin-left:5px"></big-button>
        <big-button icon="copilot" line1="Copilot" latin disabled style="width:42px"></big-button>
      </ribbon-group>
      <ribbon-group label="Excel Labs" latin style="width:68px">
        <big-button icon="flask" line1="Excel" line2="Labs" latin style="width:67px"></big-button>
      </ribbon-group>
      <span class="fold">${icon('chevronBig')}</span>`;
  }
}

/* ---------- formula bar ---------- */

class FormulaBar extends BaseElement {
  styles() {
    return `
      :host { display: flex; align-items: center; height: 31px; margin: 7px 8px; font-size: 15px; }
      .box { display: flex; align-items: center; height: 31px; border: 1px solid var(--line); border-radius: 4px; background: #fff; }
      .name { width: 199px; padding: 0 4px 0 7px; }
      .name input { flex: 1; min-width: 0; }
      .tools { width: 86px; justify-content: space-between; padding: 0 2px 0 6px; margin-right: 4px; color: #8a8a8a; }
      .fx { font: italic 18px "Liberation Serif", serif; color: #262626; }
      .formula { flex: 1; padding: 0 3px 0 12px; }
      .formula input { flex: 1; font-family: "Noto Sans CJK JP", sans-serif; font-size: 14px; }
      .dots { width: 19px; display: grid; place-items: center; }
    `;
  }

  render() {
    return `
      <div class="box name"><input aria-label="名前ボックス" value="H3">${icon('chevronBig')}</div>
      <span class="dots">${icon('dots')}</span>
      <div class="box tools">${icon('cancel')}${icon('enter')}<button class="fx">fx</button>${icon('chevronBig')}</div>
      <div class="box formula"><input aria-label="数式" value="=G3">${icon('chevronBig')}</div>`;
  }
}

/* ---------- sheet ---------- */

const COLUMNS = [88, 128, 128, 128, 128, 128, 68, 127, ...Array(13).fill(72)];
const HEADINGS = ['メンバー', '業務ソフト基本', '顧客対応', 'レポート', '資料作成', '会議参加', '', '達成度'];
const MEMBERS = [
  ['山田', '10110', '60%'],
  ['佐藤', '00101', '40%'],
  ['鈴木', '11001', '60%'],
  ['田中', '11101', '80%'],
  ['高橋', '01110', '60%'],
  ['伊藤', '10001', '40%'],
  ['渡辺', '11111', '100%'],
  ['小林', '01000', '40%'],
  ['加藤', '11110', '80%'],
  ['吉田', '01101', '60%'],
];

class SheetGrid extends BaseElement {
  styles() {
    return `
      :host { display: flex; flex: 1; min-height: 0; position: relative; overflow: hidden; }
      table {
        flex: 1;
        table-layout: fixed;
        border-collapse: separate;
        border-spacing: 0;
        background: #fff;
        font-family: "Noto Sans CJK JP", sans-serif;
        font-size: 15px;
        font-weight: 300;
        font-feature-settings: normal;
        color: #000;
        height: 0;
      }
      th, td { padding: 0; line-height: 22px; overflow: hidden; white-space: nowrap; }
      th { font-weight: inherit; background: var(--chrome); }
      thead th { height: 24px; border-right: 1px solid #9f9f9f; border-bottom: 1px solid #9f9f9f; }
      thead th:last-child { border-right: 0; }
      thead th.sel { background: #d2d2d2; color: #1f7244; border-bottom: 2px solid #1f7244; }
      tbody th {
        height: 31px;
        vertical-align: bottom;
        border-right: 1px solid #9f9f9f;
        border-bottom: 1px solid #bdbdbd;
        line-height: 26px;
      }
      tbody th.sel { background: #d2d2d2; color: #1f7244; border-right: 2px solid #1f7244; }
      td { border-right: 1px solid #dcdcdc; border-bottom: 1px solid #dcdcdc; padding: 0 2px 2px; text-align: center; }
      td:last-child { padding: 0; border-right: 0; }
      td.num { text-align: right; }
      td.name { text-align: left; border-right-color: #000; }
      .head td { background: #94dcf8; font-weight: bold; border-right-color: #94dcf8; border-bottom-color: #000; }
      .head td.name { text-align: center; border-right-color: #000; }
      .head td.blank { background: #fff; border-color: #dcdcdc; }
      .head td.goal { text-align: left; padding-left: 7px; }
      td.picked { background: #c6c6c6; border-bottom-color: #adadad; }
      .corner svg { margin: 3px 3px 0 auto; }
      .range {
        position: absolute;
        left: 828px;
        top: 53px;
        width: 130px;
        height: 313px;
        border: 2px solid #1f7244;
      }
      .range::after {
        content: "";
        position: absolute;
        right: -3px;
        bottom: -3px;
        width: 5px;
        height: 5px;
        background: #1f7244;
        outline: 1px solid #fff;
      }
      .scroll {
        flex: none;
        width: 22px;
        display: flex;
        flex-direction: column;
        align-items: center;
        padding: 6px 0 2px;
      }
      .scroll i { width: 9px; height: 511px; margin: 24px 0 auto; border-radius: 5px; background: #707070; }
    `;
  }

  row(n) {
    const cells = [];
    const member = MEMBERS[n - 3];
    for (let c = 0; c < COLUMNS.length + 1; c++) {
      if (n === 2) {
        const cls = c === 0 ? 'name' : c === 7 ? 'goal' : c > 7 ? 'blank' : '';
        cells.push(`<td class="${cls}">${HEADINGS[c] || ''}</td>`);
      } else if (member && c < 8) {
        if (c === 0) cells.push(`<td class="name">${member[0]}</td>`);
        else if (c < 6) cells.push(`<td>${member[1][c - 1] === '1' ? '〇' : ''}</td>`);
        else cells.push(`<td class="num ${c === 7 && n > 3 ? 'picked' : ''}">${member[2]}</td>`);
      } else {
        cells.push('<td></td>');
      }
    }
    return `<tr class="${n === 2 ? 'head' : ''}"><th scope="row" class="${member ? 'sel' : ''}">${n}</th>${cells.join('')}</tr>`;
  }

  render() {
    const letters = COLUMNS.map((w, i) => String.fromCharCode(65 + i));
    const rows = Array.from({ length: 25 }, (_, i) => this.row(i + 2)).join('');
    return `
      <table>
        <colgroup><col style="width:34px">${COLUMNS.map(w => `<col style="width:${w}px">`).join('')}<col></colgroup>
        <thead><tr>
          <th class="corner"><svg width="16" height="16"><path fill="#b4b4b4" d="M16 0V16H0Z"/></svg></th>
          ${letters.map(l => `<th scope="col" class="${l === 'H' ? 'sel' : ''}">${l}</th>`).join('')}<th></th>
        </tr></thead>
        <tbody>${rows}</tbody>
      </table>
      <div class="range"></div>
      <div class="scroll">${icon('triUp')}<i></i>${icon('triDown')}</div>`;
  }
}

class SheetBar extends BaseElement {
  styles() {
    return `
      :host { display: flex; height: 31px; align-items: center; border-bottom: 1px solid #c6c6c6; font-size: 15px; }
      .nav { display: flex; gap: 25px; width: 113px; padding-left: 28px; color: #9f9f9f; }
      button { height: 30px; }
      .tab { width: 75px; border-right: 1px solid var(--line); height: 18px; line-height: 18px; }
      .on {
        align-self: flex-start;
        width: 68px;
        height: 27px;
        margin: 0 4px;
        padding: 0 8px;
        background: #fff;
        border-radius: 0 0 5px 5px;
        box-shadow: 0 0 2px rgba(0, 0, 0, 0.3);
        clip-path: inset(0 -3px -3px -3px);
      }
      .on span { display: block; line-height: 22px; border-bottom: 2px solid var(--green); }
      .add { padding-left: 42px; border-left: 1px solid var(--line); height: 18px; }
      .dots { margin-left: auto; padding-right: 15px; }
      .track {
        display: flex;
        align-items: center;
        width: 728px;
        height: 17px;
        padding: 0 6px;
        margin-right: 20px;
        border-radius: 8px;
        background: #f5f5f5;
      }
      .track i { width: 669px; height: 9px; margin: 0 auto 0 3px; border-radius: 5px; background: #707070; }
    `;
  }

  render() {
    return `
      <span class="nav">${icon('arrowLeft')}${icon('arrowRight')}</span>
      <button class="tab">Sheet1</button>
      <button class="on"><span>Sheet2</span></button>
      <button class="add" aria-label="新しいシート">${icon('plus')}</button>
      <span class="dots">${icon('dots')}</span>
      <div class="track">${icon('triLeft')}<i></i>${icon('triRight')}</div>`;
  }
}

class StatusBar extends BaseElement {
  styles() {
    return `
      :host { display: flex; align-items: center; height: 22px; padding: 0 20px 0 12px; background: #f5f5f5; }
      .ready { width: 67px; }
      .stats { display: flex; gap: 18px; margin-left: auto; padding-right: 20px; }
      .view { width: 40px; height: 22px; display: grid; place-items: center; }
      .view.on { background: #dedede; }
      .zoom { display: flex; align-items: center; justify-content: space-between; width: 126px; margin: 0 15px 0 5px; font-size: 15px; }
      input { appearance: none; width: 100px; height: 12px; background: linear-gradient(#707070, #707070) center / 100% 1px no-repeat; }
      input::-webkit-slider-thumb { appearance: none; width: 4px; height: 11px; background: #595959; }
    `;
  }

  render() {
    const stats = ['平均: 62%', 'データの個数: 10', '数値の個数: 10', '最小値: 40%', '最大値: 100%', '合計: 620%'];
    return `
      <span class="ready">準備完了</span>${icon('macro')}
      <span class="stats">${stats.map(s => `<span>${s}</span>`).join('')}</span>
      <button class="view on" aria-label="標準">${icon('viewNormal')}</button>
      <button class="view" aria-label="ページ レイアウト">${icon('viewPage')}</button>
      <button class="view" aria-label="改ページ プレビュー">${icon('viewBreak')}</button>
      <span class="zoom">−<input type="range" aria-label="ズーム" min="0" max="200" value="100">+</span>
      <span>100%</span>`;
  }
}

/* ---------- menus ---------- */

class RuleMenu extends BaseElement {
  styles() {
    return `
      :host {
        display: block;
        width: 209px;
        padding-bottom: 2px;
        border: 1px solid #595959;
        background: #fff;
        box-shadow: 1px 2px 4px rgba(0, 0, 0, 0.2);
      }
      button { display: flex; align-items: center; width: 100%; text-align: left; }
      button > :last-child { margin-left: auto; margin-right: 8px; }
      .big { height: 43px; padding-left: 15px; gap: 4px; font-weight: bold; }
      .big span:first-child { width: 31px; }
      .big span:nth-child(2) { padding-top: 6px; }
      .big.on { background: #f3f3f3; }
      .small { height: 28px; padding: 1px 0 0 13px; gap: 9px; color: #444; }
      hr { margin: 0 1px; border: 0; border-top: 1px solid #c6c6c6; }
    `;
  }

  render() {
    const big = [['menuHighlight', 'セルの強調表示ルール', 'H'], ['menuTop', '上位/下位ルール', 'T'], ['menuBar', 'データ バー', 'D'],
      ['menuScale', 'カラー スケール', 'S'], ['menuSet', 'アイコン セット', 'I']];
    const small = [['newRule', '新しいルール', 'N', '...'], ['clearRule', 'ルールのクリア', 'C', ''], ['manageRule', 'ルールの管理', 'R', '...']];
    return `
      ${big.map(([i, t, k]) => `<button class="big ${k === 'D' ? 'on' : ''}"><span>${icon(i)}</span><span>${t}(<u>${k}</u>)</span>${icon('arrowRight')}</button>`).join('')}
      <hr>
      ${small.map(([i, t, k, e]) => `<button class="small">${icon(i)}<span>${t}(<u>${k}</u>)${e}</span>${e ? '<i></i>' : icon('arrowRight')}</button>`).join('')}`;
  }
}

const BAR_COLORS = [['#4a7ebb', '#5fbf7f', '#ff555a'], ['#ffb628', '#008aef', '#d6007b']];
const BAR_WIDTHS = [5, 14, 3, 8, 12];

class BarGallery extends BaseElement {
  styles() {
    return `
      :host {
        display: block;
        width: 167px;
        border: 1px solid #c6c6c6;
        background: #fff;
        box-shadow: 1px 2px 4px rgba(0, 0, 0, 0.2);
      }
      h3 { margin: 0; padding: 0 0 0 15px; font-size: 12px; line-height: 29px; white-space: nowrap; }
      .row { display: flex; padding-left: 1px; }
      .row button { width: 40px; height: 40px; display: grid; place-items: center; }
      hr { margin: 9px 1px 0; border: 0; border-top: 1px solid #c6c6c6; }
      .more { height: 30px; padding-left: 35px; color: #444; }
    `;
  }

  swatch(color, gradient) {
    const id = `g${color.slice(1)}`;
    const bars = BAR_WIDTHS.map((w, i) => gradient
      ? `<rect x="7" y="${1 + i * 5}" width="${w + 2}" height="4" fill="url(#${id})"/>`
      : `<rect x="7" y="${1 + i * 5}" width="${w}" height="${i < 4 ? 5 : 4}" fill="${color}"/>`).join('');
    return `<svg width="28" height="26">
      <linearGradient id="${id}"><stop offset="0" stop-color="${color}"/><stop offset="1" stop-color="${color}" stop-opacity=".1"/></linearGradient>
      ${table(28, 26, [6, 21], [5, 10, 15, 20], '#b4b4b4')}
      ${bars}
      <path stroke="#595959" d="M17 3.500h3M17 8.500h3M17 13.500h3M17 18.500h3M17 23.500h3"/>
      <path fill="none" stroke="#7a7a7a" d="M.5 .5H27.500V25.500H.5Z"/></svg>`;
  }

  block(gradient) {
    return BAR_COLORS.map(row => `<div class="row">${row.map(c => `<button aria-label="データ バー">${this.swatch(c, gradient)}</button>`).join('')}</div>`).join('');
  }

  render() {
    return `
      <h3>塗りつぶし (グラデーション)</h3>${this.block(true)}<hr>
      <h3>塗りつぶし (単色)</h3>${this.block(false)}<hr>
      <button class="more">その他のルール(<u>M</u>)...</button>`;
  }
}

/* ---------- annotations ---------- */

class MarkBox extends BaseElement {
  styles() {
    return `
      :host {
        display: block;
        border: 7px solid var(--red);
        border-radius: 8px;
        box-shadow: 2px 2px 5px rgba(0, 0, 0, 0.5), inset 2px 2px 5px rgba(0, 0, 0, 0.5);
        pointer-events: none;
      }
    `;
  }
}

class StepBadge extends BaseElement {
  styles() {
    return `
      :host { display: block; width: 48px; height: 48px; }
      svg { overflow: visible; filter: drop-shadow(2px 2px 2px rgba(0, 0, 0, 0.55)); }
      circle { fill: none; }
      .rim { stroke: #fff; stroke-width: 7; }
      .ring { stroke: var(--red); stroke-width: 2; }
      text {
        font-family: "Noto Sans CJK JP", sans-serif;
        font-size: 36px;
        font-weight: 500;
        text-anchor: middle;
        fill: var(--red);
        stroke: #fff;
        stroke-width: 5;
        stroke-linejoin: round;
        paint-order: stroke;
      }
      .narrow text { font-family: "Liberation Sans Narrow", "Roboto Condensed", "Liberation Sans", sans-serif; font-size: 30px; }
    `;
  }

  render() {
    const n = this.getAttribute('n');
    const narrow = n.length > 1;
    return `<svg class="${narrow ? 'narrow' : ''}" width="48" height="48">
      <circle class="rim" cx="24" cy="24" r="20"/>
      <text x="24" y="${narrow ? 35 : 37}">${n}</text>
      <circle class="ring" cx="24" cy="24" r="20"/>
    </svg>`;
  }
}

class DownArrow extends BaseElement {
  styles() { return ':host { display: block; } svg { overflow: visible; filter: drop-shadow(2px 2px 2px rgba(0, 0, 0, 0.5)); }'; }
  render() {
    return '<svg width="42" height="284"><path fill="#f00" d="M20 0H22L31 241 42 237 21 284 0 237 11 241Z"/></svg>';
  }
}

/* ---------- window ---------- */

class ExcelWindow extends BaseElement {
  styles() {
    return `
      :host {
        display: flex;
        flex-direction: column;
        position: relative;
        height: 100vh;
        background: var(--chrome);
        font-feature-settings: "palt";
      }
      main {
        display: flex;
        flex-direction: column;
        flex: 1;
        min-height: 0;
        border: 1px solid var(--green);
        border-top: 0;
      }
      .over { position: absolute; }
    `;
  }

  render() {
    const at = (x, y, w, h) => `style="left:${x}px;top:${y}px${w ? `;width:${w}px;height:${h}px` : ''}"`;
    return `
      <title-bar></title-bar>
      <main>
        <tab-strip></tab-strip>
        <ribbon-bar></ribbon-bar>
        <formula-bar></formula-bar>
        <sheet-grid></sheet-grid>
        <sheet-bar></sheet-bar>
        <status-bar></status-bar>
      </main>
      <rule-menu class="over" ${at(994, 160)}></rule-menu>
      <bar-gallery class="over" ${at(1200, 249)}></bar-gallery>
      <down-arrow class="over" ${at(871, 294)}></down-arrow>
      <mark-box class="over" ${at(55, 45, 62, 41)}></mark-box>
      <mark-box class="over" ${at(989, 79, 62, 86)}></mark-box>
      <mark-box class="over" ${at(989, 239, 216, 58)}></mark-box>
      <mark-box class="over" ${at(1239, 435, 47, 48)}></mark-box>
      <step-badge class="over" n="6" ${at(920, 540)}></step-badge>
      <step-badge class="over" n="7" ${at(125, 42)}></step-badge>
      <step-badge class="over" n="8" ${at(1054, 57)}></step-badge>
      <step-badge class="over" n="9" ${at(1201, 195)}></step-badge>
      <step-badge class="over" n="10" ${at(1236, 488)}></step-badge>`;
  }
}

customElements.define('xl-icon', XlIcon);
customElements.define('title-bar', TitleBar);
customElements.define('tab-strip', TabStrip);
customElements.define('ribbon-group', RibbonGroup);
customElements.define('big-button', BigButton);
customElements.define('small-button', SmallButton);
customElements.define('tool-button', ToolButton);
customElements.define('drop-box', DropBox);
customElements.define('ribbon-bar', RibbonBar);
customElements.define('formula-bar', FormulaBar);
customElements.define('sheet-grid', SheetGrid);
customElements.define('sheet-bar', SheetBar);
customElements.define('status-bar', StatusBar);
customElements.define('rule-menu', RuleMenu);
customElements.define('bar-gallery', BarGallery);
customElements.define('mark-box', MarkBox);
customElements.define('step-badge', StepBadge);
customElements.define('down-arrow', DownArrow);
customElements.define('excel-window', ExcelWindow);
</script>
</body>
</html>
